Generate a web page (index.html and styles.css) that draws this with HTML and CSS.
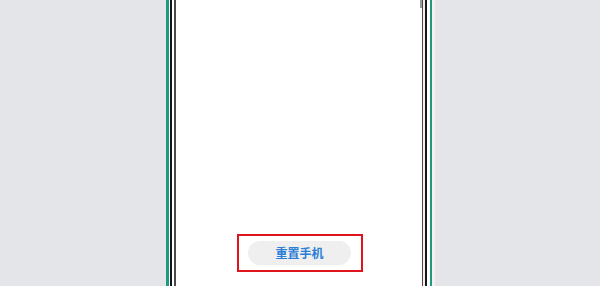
FILE: index.html
```html
<!DOCTYPE html>
<html lang="zh">
<head>
<meta charset="utf-8">
<title>重置手机</title>
<link rel="stylesheet" href="styles.css">
</head>
<body>
<div class="stage">
  <div class="side"></div>
  <div class="s teal w3"></div>
  <div class="s white w1"></div>
  <div class="s black w2"></div>
  <div class="s white w2"></div>
  <div class="s dark w2"></div>
  <div class="screen">
    <div class="scrollbar"></div>
    <div class="highlight">
      <div class="btn">重置手机</div>
    </div>
  </div>
  <div class="s dark w1"></div>
  <div class="s pale w2"></div>
  <div class="s black w2"></div>
  <div class="s white w3"></div>
  <div class="s teal w2"></div>
  <div class="s pale w3"></div>
  <div class="side"></div>
</div>
</body>
</html>
```
FILE: styles.css
```css
html, body {
  margin: 0;
  padding: 0;
  background: #e4e5e9;
}
.stage {
  display: flex;
  width: 600px;
  height: 286px;
  overflow: hidden;
}
.side {
  flex: 1;
  background: #e4e5e9;
}
.s { flex: none; height: 100%; }
.w1 { width: 1px; }
.w2 { width: 2px; }
.w3 { width: 3px; }
.teal { background: #1d9a7f; }
.white { background: #ffffff; }
.pale { background: #f4f0f2; }
.black { background: #161616; }
.dark { background: #4a4a4e; }
.screen {
  position: relative;
  flex: none;
  width: 246px;
  background: #ffffff;
  display: flex;
  flex-direction: column;
  justify-content: flex-end;
  align-items: flex-start;
  padding-bottom: 14px;
  box-sizing: border-box;
}
.scrollbar {
  position: absolute;
  right: 0;
  top: 0;
  width: 2px;
  height: 8px;
  background: #9a9a9a;
}
.highlight {
  margin-left: 61px;
  width: 126px;
  height: 38px;
  box-sizing: border-box;
  border: 2px solid #e0141c;
  display: flex;
  align-items: center;
  justify-content: center;
}
.btn {
  width: 103px;
  height: 24px;
  border-radius: 12px;
  background: #efefef;
  color: #2a7ed6;
  font-family: "Noto Sans CJK SC", "Noto Sans", sans-serif;
  font-size: 12px;
  font-weight: 700;
  line-height: 24px;
  text-align: center;
}
```
